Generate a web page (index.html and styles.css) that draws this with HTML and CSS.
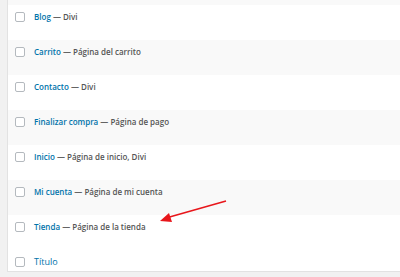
FILE: index.html
```html
<!DOCTYPE html>
<html lang="es">
<head>
  <meta charset="UTF-8" />
  <title>Páginas</title>
  <link rel="stylesheet" href="styles.css">
</head>
<body>

  <!-- Pages list -->
  <div class="list">
    <div class="row alt top"></div>

    <div class="row">
      <span class="check"></span>
      <div class="title"><a href="#">Blog</a> <span class="state">— Divi</span></div>
    </div>
    <div class="row alt">
      <span class="check"></span>
      <div class="title"><a href="#">Carrito</a> <span class="state">— Página del carrito</span></div>
    </div>
    <div class="row">
      <span class="check"></span>
      <div class="title"><a href="#">Contacto</a> <span class="state">— Divi</span></div>
    </div>
    <div class="row alt">
      <span class="check"></span>
      <div class="title"><a href="#">Finalizar compra</a> <span class="state">— Página de pago</span></div>
    </div>
    <div class="row">
      <span class="check"></span>
      <div class="title"><a href="#">Inicio</a> <span class="state">— Página de inicio, Divi</span></div>
    </div>
    <div class="row alt">
      <span class="check"></span>
      <div class="title"><a href="#">Mi cuenta</a> <span class="state">— Página de mi cuenta</span></div>
    </div>
    <div class="row">
      <span class="check"></span>
      <div class="title"><a href="#">Tienda</a> <span class="state">— Página de la tienda</span></div>
    </div>

    <div class="row foot">
      <span class="check"></span>
      <div class="title"><a href="#" class="plain">Título</a></div>
    </div>

    <!-- arrow pointing at Tienda -->
    <svg class="arrow" width="80" height="30" viewBox="0 0 80 30">
      <line x1="74" y1="1" x2="14" y2="18" stroke="#e8161b" stroke-width="1.6" />
      <polygon points="8,21 17,13 20,22" fill="#e8161b" />
    </svg>
  </div>

</body>
</html>
```

FILE: styles.css
```css
* {
  margin: 0;
  padding: 0;
  box-sizing: border-box;
}

body {
  background: #f1f1f1;
  font-family: "Open Sans", "Noto Sans", sans-serif;
  font-size: 8px;
  height: 277px;
  overflow: hidden;
}

/* List table */
.list {
  position: relative;
  margin-left: 7px;
  background: #fff;
  border-left: 1px solid #e2e2e2;
  border-bottom: 1px solid #e2e2e2;
  width: 400px;
}

.row {
  display: flex;
  align-items: flex-start;
  gap: 9px;
  height: 35px;
  padding: 7px 0 0 7px;
  background: #fff;
}

.row.alt {
  background: #f9f9f9;
}

.row.top {
  height: 5px;
  padding: 0;
}

.row.foot {
  height: 21px;
  padding-top: 7px;
}

.check {
  width: 10px;
  height: 10px;
  border: 1px solid #b4b9be;
  border-radius: 2px;
  background: #fff;
  flex-shrink: 0;
}

.title {
  line-height: 10px;
  white-space: nowrap;
}

.title a {
  color: #0073aa;
  font-weight: 600;
  text-decoration: none;
}

.title a.plain {
  font-weight: 400;
  font-size: 9px;
}

.state {
  color: #555;
  font-weight: 600;
}

.arrow {
  position: absolute;
  left: 144px;
  top: 200px;
}
```
